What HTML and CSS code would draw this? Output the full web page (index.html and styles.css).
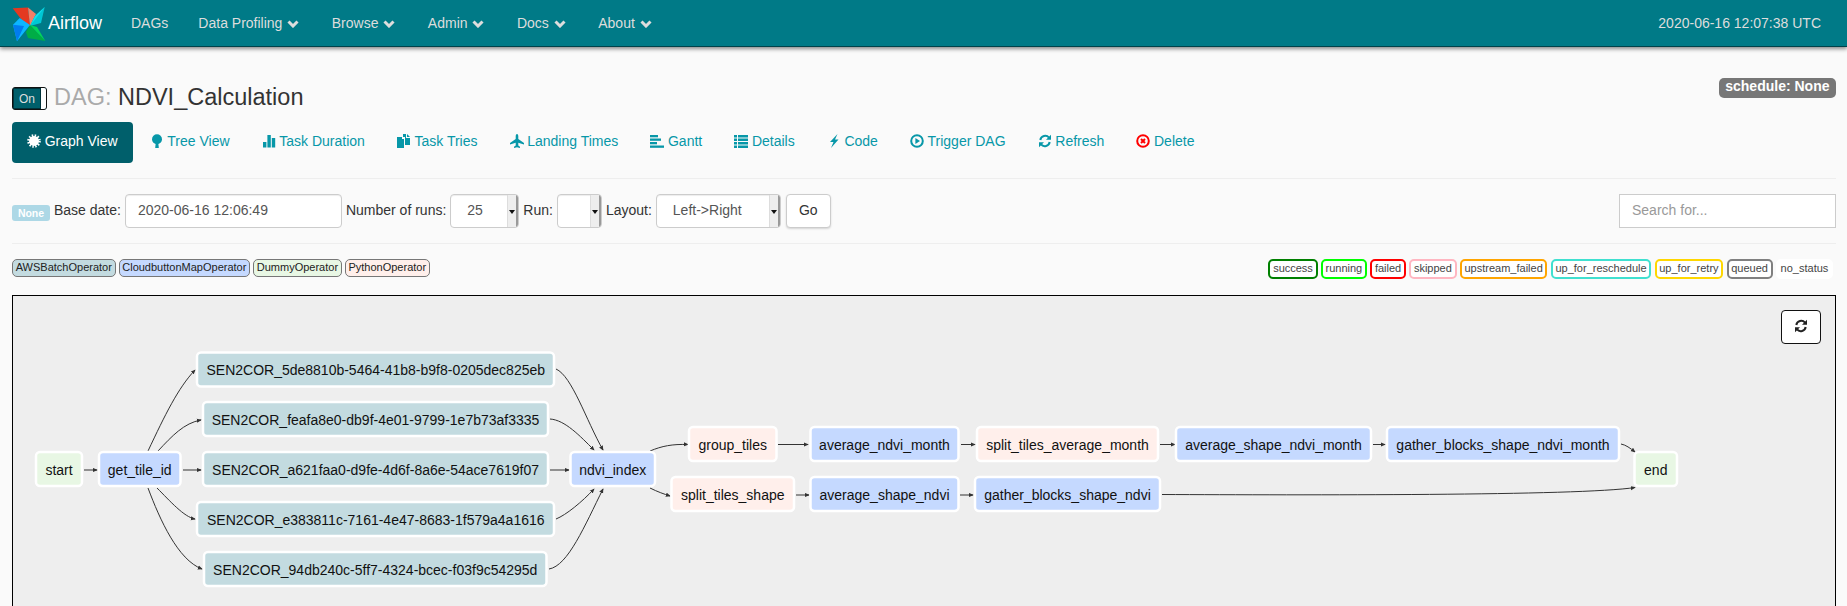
FILE: index.html
```html
<!DOCTYPE html>
<html>
<head>
    <meta charset="utf-8">
    <title>Airflow - NDVI_Calculation</title>
    <link rel="stylesheet" href="styles.css">
</head>
<body>

<!-- top bar -->
<nav class="navbar">
    <a class="brand">
        <svg class="logo" viewBox="12 4 34 35" width="34" height="35">
            <polygon fill="#e43921" points="12.7,5.3 28,4.6 30,23 21,16"/>
            <polygon fill="#f37f68" points="28,4.6 36,11 30,23"/>
            <polygon fill="#00c7d4" points="44.7,4 41,20 30,23 35,13"/>
            <polygon fill="#11e1ee" points="44.7,4 35,13 30,23"/>
            <polygon fill="#00ad46" points="45.3,38 28,35 26,29 30,22"/>
            <polygon fill="#04d659" points="45.3,38 37,24 30,22"/>
            <polygon fill="#0cb6ff" points="19.7,15 13,21.7 17,38.3 30,22"/>
            <polygon fill="#017cee" points="13,21.7 17,38.3 24,23"/>
        </svg>
        <span>Airflow</span>
    </a>
    <ul class="menu">
        <li>DAGs</li>
        <li>Data Profiling <svg class="chevron" viewBox="0 0 12 8"><path d="M1.500 1.500 6 6l4.500-4.500"/></svg></li>
        <li>Browse <svg class="chevron" viewBox="0 0 12 8"><path d="M1.500 1.500 6 6l4.500-4.500"/></svg></li>
        <li>Admin <svg class="chevron" viewBox="0 0 12 8"><path d="M1.500 1.500 6 6l4.500-4.500"/></svg></li>
        <li>Docs <svg class="chevron" viewBox="0 0 12 8"><path d="M1.500 1.500 6 6l4.500-4.500"/></svg></li>
        <li>About <svg class="chevron" viewBox="0 0 12 8"><path d="M1.500 1.500 6 6l4.500-4.500"/></svg></li>
    </ul>
    <span class="clock">2020-06-16 12:07:38 UTC</span>
</nav>

<div class="container">

    <div class="dag-head">
        <div class="toggle"><span class="toggle-on">On</span><span class="toggle-handle"></span></div>
        <h4 class="dag-title"><span class="dag-label">DAG:</span> NDVI_Calculation</h4>
        <span class="schedule">schedule: None</span>
    </div>

    <!-- views -->
    <ul class="pills">
        <li class="active">
            <svg class="icon" viewBox="0 0 14 14"><circle cx="7" cy="7" r="5"/><circle class="burst" cx="7" cy="7" r="5.500"/></svg>
            Graph View
        </li>
        <li>
            <svg class="icon" viewBox="0 0 14 14"><circle cx="7" cy="5.200" r="5"/><path d="M5.800 8h2.400l.6 6H5.200z"/></svg>
            Tree View
        </li>
        <li>
            <svg class="icon" viewBox="0 0 14 14"><rect x="1" y="8" width="3.400" height="5.500"/><rect x="5.400" y="1" width="3.400" height="12.500"/><rect x="9.800" y="4" width="3.400" height="9.500"/></svg>
            Task Duration
        </li>
        <li>
            <svg class="icon" viewBox="0 0 14 14"><path d="M0 3h5v2h2v9H0z"/><path d="M6 0h3v4h4v7H8V3H6z"/><path d="M10 0l3 3h-3z"/></svg>
            Task Tries
        </li>
        <li>
            <svg class="icon" viewBox="0 0 14 14"><path d="M7 0c.9 0 1.300 1 1.300 2.500V5L14 9v1.600L8.300 8.800v2.600l1.700 1.300V14L7 13.200 4 14v-1.300l1.700-1.300V8.800L0 10.600V9l5.700-4V2.500C5.700 1 6.100 0 7 0z"/></svg>
            Landing Times
        </li>
        <li>
            <svg class="icon" viewBox="0 0 14 14"><rect x="0" y="1" width="8" height="2.300"/><rect x="0" y="4.500" width="11" height="2.300"/><rect x="0" y="8" width="7" height="2.300"/><rect x="0" y="11.500" width="14" height="2.300"/></svg>
            Gantt
        </li>
        <li>
            <svg class="icon" viewBox="0 0 14 14"><path d="M0 1h3v2.500H0zM4 1h10v2.500H4zM0 4.500h3V7H0zM4 4.500h10V7H4zM0 8h3v2.500H0zM4 8h10v2.500H4zM0 11.500h3V14H0zM4 11.500h10V14H4z"/></svg>
            Details
        </li>
        <li>
            <svg class="icon" viewBox="0 0 14 14"><path d="M10.500 0 3 8h3.500L4 14l7.500-8.500H8z"/></svg>
            Code
        </li>
        <li>
            <svg class="icon" viewBox="0 0 14 14"><circle class="ring" cx="7" cy="7" r="5.800"/><path d="M5.400 4v6L10 7z"/></svg>
            Trigger DAG
        </li>
        <li>
            <svg class="icon" viewBox="0 0 14 14"><path class="arc" d="M2.300 6A5 5 0 0 1 11 3.600"/><path d="M13 .8v5H8z"/><path class="arc" d="M11.700 8A5 5 0 0 1 3 10.400"/><path d="M1 13.200v-5h5z"/></svg>
            Refresh
        </li>
        <li>
            <svg class="icon icon-red" viewBox="0 0 14 14"><circle class="ring" cx="7" cy="7" r="5.800"/><path class="arc" d="M5 5l4 4M9 5l-4 4"/></svg>
            Delete
        </li>
    </ul>

    <hr class="rule">

    <!-- filter form -->
    <form class="filters">
        <span class="none-badge">None</span>
        <label>Base date:</label>
        <input class="field date-field" value="2020-06-16 12:06:49">
        <label>Number of runs:</label>
        <div class="field select runs-select"><span>25</span><i class="select-arrow"></i></div>
        <label>Run:</label>
        <div class="field select run-select"><span></span><i class="select-arrow"></i></div>
        <label>Layout:</label>
        <div class="field select layout-select"><span>Left-&gt;Right</span><i class="select-arrow"></i></div>
        <button class="go" type="button">Go</button>
        <input class="search" placeholder="Search for...">
    </form>

    <hr class="rule">

    <!-- legends -->
    <div class="legends">
        <div class="legend-group ops">
            <span class="op op-batch">AWSBatchOperator</span>
            <span class="op op-map">CloudbuttonMapOperator</span>
            <span class="op op-dummy">DummyOperator</span>
            <span class="op op-python">PythonOperator</span>
        </div>
        <div class="legend-group states">
            <span class="state" style="border-color: green">success</span>
            <span class="state" style="border-color: lime">running</span>
            <span class="state" style="border-color: red">failed</span>
            <span class="state" style="border-color: lightpink">skipped</span>
            <span class="state" style="border-color: orange">upstream_failed</span>
            <span class="state" style="border-color: turquoise">up_for_reschedule</span>
            <span class="state" style="border-color: gold">up_for_retry</span>
            <span class="state" style="border-color: gray">queued</span>
            <span class="state no-status">no_status</span>
        </div>
    </div>

    <!-- graph: viewBox uses page coordinates -->
    <div class="graph-frame">
        <button class="graph-refresh" type="button">
            <svg class="icon" viewBox="0 0 14 14"><path class="arc" d="M2.300 6A5 5 0 0 1 11 3.600"/><path d="M13 .8v5H8z"/><path class="arc" d="M11.700 8A5 5 0 0 1 3 10.400"/><path d="M1 13.200v-5h5z"/></svg>
        </button>
        <svg class="graph" viewBox="13 296 1821 340" width="1821" height="340">
            <defs>
                <marker id="arrow" viewBox="0 0 6 6" refX="5" refY="3" markerWidth="5" markerHeight="5" orient="auto">
                    <path d="M0 .5 6 3 0 5.500z" fill="#333"/>
                </marker>
            </defs>

            <g class="edges">
                <path d="M84 470H97"/>
                <path d="M148 451C165 415 178 388 195 370"/>
                <path d="M158 451C172 436 184 423 201 420"/>
                <path d="M183 470H201"/>
                <path d="M157 488C170 501 184 517 195 519"/>
                <path d="M148 488C160 520 178 560 202 569"/>
                <path d="M556 369C572 376 586 420 603 450"/>
                <path d="M550 419C565 420 580 436 594 450"/>
                <path d="M550 470H569"/>
                <path d="M556 519C566 515 582 502 594 489"/>
                <path d="M549 569C568 566 585 525 603 489"/>
                <path d="M650 451C662 446 672 444 688 444.500"/>
                <path d="M650 488C658 492 664 494 670 496"/>
                <path d="M778 444.500H808"/>
                <path d="M961 444.500H975"/>
                <path d="M1160 444.500H1175"/>
                <path d="M1373 444.500H1385"/>
                <path d="M796 495H809"/>
                <path d="M960 495H973"/>
                <path d="M1621 444C1626 445 1630 448 1635 452"/>
                <path d="M1162 494.500C1300 495 1580 496 1635 487.500"/>
            </g>

            <g class="node node-dummy"><rect x="36" y="453" width="46" height="33" rx="4"/><text x="59" y="475">start</text></g>
            <g class="node node-map"><rect x="99" y="453" width="81.500" height="33" rx="4"/><text x="139.750" y="475">get_tile_id</text></g>

            <g class="node node-batch"><rect x="197" y="353.500" width="357" height="33" rx="4"/><text x="375.750" y="375">SEN2COR_5de8810b-5464-41b8-b9f8-0205dec825eb</text></g>
            <g class="node node-batch"><rect x="203" y="403" width="345" height="33" rx="4"/><text x="375.500" y="425">SEN2COR_feafa8e0-db9f-4e01-9799-1e7b73af3335</text></g>
            <g class="node node-batch"><rect x="203" y="453" width="345" height="33" rx="4"/><text x="375.500" y="475">SEN2COR_a621faa0-d9fe-4d6f-8a6e-54ace7619f07</text></g>
            <g class="node node-batch"><rect x="197" y="503" width="357" height="33" rx="4"/><text x="375.750" y="525">SEN2COR_e383811c-7161-4e47-8683-1f579a4a1616</text></g>
            <g class="node node-batch"><rect x="204" y="553" width="342.500" height="33" rx="4"/><text x="375.250" y="575">SEN2COR_94db240c-5ff7-4324-bcec-f03f9c54295d</text></g>

            <g class="node node-map"><rect x="570.500" y="453" width="84.500" height="33" rx="4"/><text x="612.750" y="475">ndvi_index</text></g>

            <g class="node node-python"><rect x="689" y="428" width="87.500" height="33" rx="4"/><text x="732.750" y="450">group_tiles</text></g>
            <g class="node node-map"><rect x="810.500" y="428" width="148" height="33" rx="4"/><text x="884.500" y="450">average_ndvi_month</text></g>
            <g class="node node-python"><rect x="977" y="428" width="181" height="33" rx="4"/><text x="1067.500" y="450">split_tiles_average_month</text></g>
            <g class="node node-map"><rect x="1176" y="428" width="195" height="33" rx="4"/><text x="1273.500" y="450">average_shape_ndvi_month</text></g>
            <g class="node node-map"><rect x="1387" y="428" width="232" height="33" rx="4"/><text x="1503" y="450">gather_blocks_shape_ndvi_month</text></g>

            <g class="node node-python"><rect x="671.500" y="478" width="122.500" height="33" rx="4"/><text x="732.750" y="500">split_tiles_shape</text></g>
            <g class="node node-map"><rect x="810.500" y="478" width="148" height="33" rx="4"/><text x="884.500" y="500">average_shape_ndvi</text></g>
            <g class="node node-map"><rect x="975" y="478" width="185" height="33" rx="4"/><text x="1067.500" y="500">gather_blocks_shape_ndvi</text></g>

            <g class="node node-dummy"><rect x="1634.500" y="453" width="42.500" height="33" rx="4"/><text x="1655.750" y="475">end</text></g>
        </svg>
    </div>

</div>

</body>
</html>
```

FILE: styles.css
```css
html, body {
    height: 100%;
    overflow: hidden;
}
body {
    margin: 0;
    background-color: #fafafa;
    color: #333;
    font-family: "Liberation Sans", Arial, sans-serif;
    font-size: 14px;
    line-height: 20px;
}

/* top bar */
.navbar {
    display: flex;
    align-items: center;
    height: 46px;
    background-color: #007a87;
    border-bottom: 1px solid #00424a;
    box-shadow: 0 2px 4px rgba(0, 0, 0, 0.45);
    color: #ddd;
}
.brand {
    display: flex;
    align-items: center;
    margin-left: 12px;
    width: 104px;
    color: #fff;
    font-size: 18px;
}
.logo {
    flex: none;
    margin-top: 2px;
    margin-right: 2px;
}
.menu {
    display: flex;
    list-style: none;
    margin: 0;
    padding: 0;
}
.menu li {
    padding: 0 15px;
    white-space: nowrap;
}
.chevron {
    width: 12px;
    height: 8px;
    fill: none;
    stroke: #ddd;
    stroke-width: 3;
    margin-left: 1px;
    margin-right: 2.500px;
}
.clock {
    margin-left: auto;
    margin-right: 26px;
}

.container {
    padding: 0 11px 0 12px;
}

/* title row */
.dag-head {
    display: flex;
    align-items: flex-start;
    height: 45px;
    margin-top: 30px;
}
.toggle {
    display: flex;
    width: 35px;
    height: 23px;
    box-sizing: border-box;
    margin-top: 10px;
    border: 1px solid #111;
    border-radius: 3px;
    background-color: #005f6b;
    overflow: hidden;
}
.toggle-on {
    flex: 1;
    color: #ddd;
    font-size: 12px;
    line-height: 21px;
    text-align: center;
    border: 1px solid #00323a;
}
.toggle-handle {
    width: 5px;
    background-color: #fff;
}
.dag-title {
    margin: 5px 0 0 7px;
    font-size: 23.500px;
    font-weight: normal;
    line-height: 30px;
    color: #333;
}
.dag-label {
    color: #aaa;
}
.schedule {
    margin-top: 1px;
    margin-left: auto;
    padding: 0 6.500px;
    height: 20px;
    border-radius: 5px;
    background-color: #777;
    color: #fff;
    font-weight: bold;
    line-height: 17px;
}

/* view tabs */
.pills {
    display: flex;
    gap: 2px;
    list-style: none;
    margin: 0;
    padding: 0;
}
.pills li {
    display: flex;
    align-items: center;
    gap: 3.700px;
    height: 41px;
    box-sizing: border-box;
    padding: 0 15px 4px;
    border-radius: 4px;
    color: #0797a8;
}
.pills li.active {
    background-color: #005f6b;
    color: #fff;
}
.icon {
    width: 14px;
    height: 14px;
    fill: currentColor;
}
.icon-red {
    color: #f00;
}
.burst {
    fill: none;
    stroke: currentColor;
    stroke-width: 2.600;
    stroke-dasharray: 1.440;
}
.ring {
    fill: none;
    stroke: currentColor;
    stroke-width: 2;
}
.arc {
    fill: none;
    stroke: currentColor;
    stroke-width: 2;
}

.rule {
    margin: 15px 0;
    border: 0;
    border-top: 1px solid #eee;
}

/* filter form */
.filters {
    display: flex;
    align-items: center;
    height: 34px;
}
.none-badge {
    width: 38px;
    height: 16px;
    margin-top: 3px;
    border-radius: 3px;
    background-color: #add8e6;
    color: #fff;
    font-size: 10.500px;
    font-weight: bold;
    line-height: 16px;
    text-align: center;
}
.filters label {
    margin: 0 4px 2px;
    white-space: nowrap;
}
.field {
    box-sizing: border-box;
    height: 34px;
    border: 1px solid #ccc;
    border-radius: 4px;
    background-color: #fff;
    box-shadow: inset 0 1px 1px rgba(0, 0, 0, 0.075);
    color: #555;
    font-family: inherit;
    font-size: 14px;
}
.date-field {
    width: 217px;
    padding: 0 12px 3px;
}
.select {
    display: flex;
    align-items: center;
    justify-content: space-between;
    padding-left: 16px;
    overflow: hidden;
}
.select span {
    margin-bottom: 3px;
}
.runs-select {
    width: 69px;
}
.run-select {
    width: 45px;
}
.layout-select {
    width: 125px;
}
.select-arrow {
    position: relative;
    width: 11px;
    height: 100%;
    background-color: #eee;
    border-left: 1px solid #ddd;
    border-right: 2px solid #999;
    box-sizing: border-box;
}
.select-arrow::after {
    content: "";
    position: absolute;
    top: 15px;
    left: 1px;
    border: 3px solid transparent;
    border-top: 4px solid #111;
    border-bottom: 0;
}
.go {
    width: 45px;
    height: 34px;
    margin-left: 5px;
    padding: 0 0 3px;
    border: 1px solid #ccc;
    border-radius: 4px;
    background-color: #fff;
    box-shadow: 0 1px 2px rgba(0, 0, 0, 0.15);
    color: #333;
    font-family: inherit;
    font-size: 14px;
}
.search {
    box-sizing: border-box;
    width: 217px;
    height: 34px;
    margin-left: auto;
    padding: 0 12px 3px;
    border: 1px solid #ccc;
    background-color: #fff;
    font-family: inherit;
    font-size: 14px;
}
.search::placeholder {
    color: #999;
}

/* legends */
.legends {
    display: flex;
    justify-content: space-between;
    height: 20px;
    margin-bottom: 16px;
    font-size: 11px;
}
.legend-group {
    display: flex;
    gap: 3.300px;
    white-space: nowrap;
}
.ops {
    gap: 3px;
}
.op {
    box-sizing: border-box;
    height: 18px;
    padding: 0 2.700px;
    border: 1px solid #777;
    border-radius: 5px;
    color: #222;
    line-height: 15px;
}
.op-batch {
    background-color: #c3dbe0;
}
.op-map {
    background-color: #c5d9ff;
}
.op-dummy {
    background-color: #e8f7e4;
}
.op-python {
    background-color: #ffefeb;
}
.state {
    box-sizing: border-box;
    height: 20px;
    padding: 0 2.700px;
    border: 2px solid;
    border-radius: 5px;
    background-color: #fff;
    color: #444;
    line-height: 15px;
}
.no-status {
    border-color: #fff;
}
.states {
    margin-right: 3px;
}

/* graph */
.graph-frame {
    position: relative;
    height: 340px;
    border: 1px solid #000;
    background-color: #eee;
}
.graph {
    display: block;
}
.graph-refresh {
    position: absolute;
    top: 14px;
    right: 14px;
    width: 40px;
    height: 34px;
    padding: 0;
    border: 1px solid #111;
    border-radius: 4px;
    background-color: #fff;
    color: #222;
}
.edges path {
    fill: none;
    stroke: #333;
    stroke-width: 1;
    marker-end: url(#arrow);
}
.node rect {
    height: 34px;
    transform: translateY(-1px);
    stroke: #fff;
    stroke-width: 2.500;
}
.node text {
    fill: #111;
    font-size: 14px;
    text-anchor: middle;
}
.node-batch rect {
    fill: #c3dbe0;
}
.node-map rect {
    fill: #c5d9ff;
}
.node-dummy rect {
    fill: #e8f7e4;
}
.node-python rect {
    fill: #ffefeb;
}
```
